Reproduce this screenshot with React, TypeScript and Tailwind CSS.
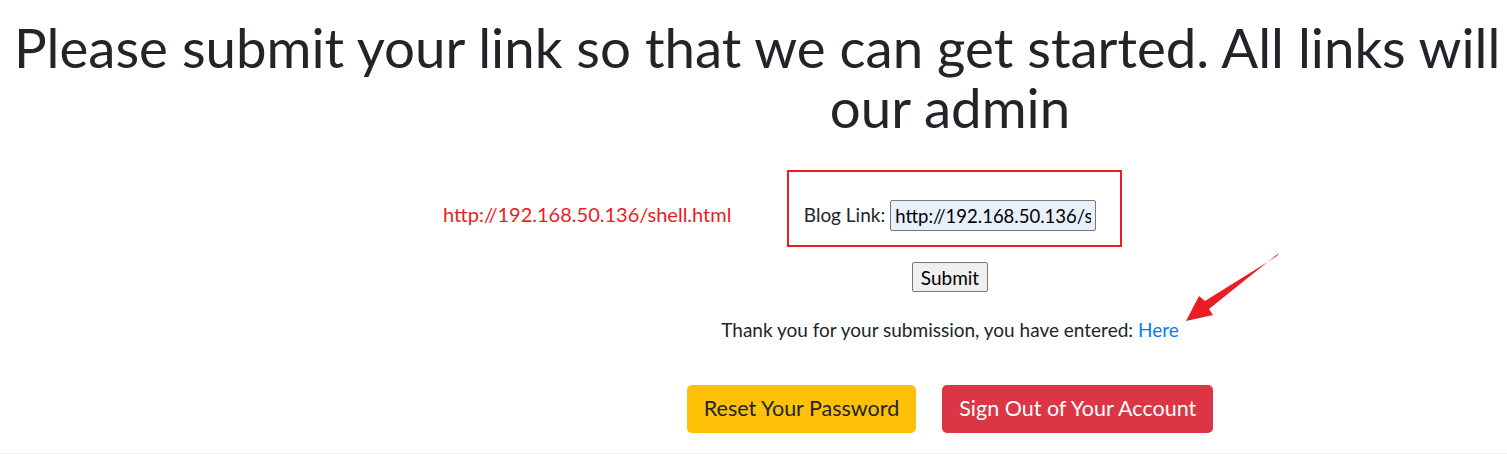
import React from "react";

export default function App() {
  const font = { fontFamily: 'Lato, "Open Sans", Arial, sans-serif' };
  return (
    <div
      className="relative w-[1507px] h-[454px] overflow-hidden bg-white border-b border-[#efefef] text-[#212529]"
      style={font}
    >
      <div className="w-[1900px] flex flex-col">
        <h1 className="pt-[17px] text-[54.6px] leading-[60px] font-normal">
          <div className="pl-[14px] whitespace-nowrap">
            Please submit your link so that we can get started. All links will
          </div>
          <div className="ml-[14px] w-[1872px] text-center">our admin</div>
        </h1>

        <form className="flex flex-col items-center mt-[63px]">
          <div className="flex items-center gap-[5px] text-[19px]">
            <label>Blog Link:</label>
            <input
              readOnly
              value="http://192.168.50.136/shell.html"
              className="w-[206px] h-[31px] px-[4px] border border-[#767676] rounded-[2px] bg-[#e8f0fe] text-[18.5px] text-black outline-none"
              style={font}
            />
          </div>
          <button
            type="button"
            className="mt-[31px] h-[30px] px-[8px] bg-[#efefef] border border-[#767676] rounded-[2px] text-[19px] text-black leading-none"
          >
            Submit
          </button>
          <p className="mt-[24px] text-[19px]">
            Thank you for your submission, you have entered:{" "}
            <a className="text-[#007bff]">Here</a>
          </p>
          <div className="mt-[40px] flex gap-[26px]">
            <button
              type="button"
              className="h-[48px] px-[17px] rounded-[5px] bg-[#ffc107] text-[#212529] text-[21.5px]"
            >
              Reset Your Password
            </button>
            <button
              type="button"
              className="h-[48px] px-[17px] rounded-[5px] bg-[#dc3545] text-white text-[21.5px]"
            >
              Sign Out of Your Account
            </button>
          </div>
        </form>
      </div>

      {/* annotations */}
      <div className="absolute left-[443px] top-[199px] text-[20px] text-[#ec1c24]">
        http://192.168.50.136/shell.html
      </div>
      <div className="absolute left-[787px] top-[170px] w-[335px] h-[77px] border-2 border-[#ec1c24]" />
      <svg
        className="absolute left-[1180px] top-[248px]"
        width="110"
        height="80"
        viewBox="1180 248 110 80"
      >
        <polygon
          points="1279,253 1277,256 1205,301 1199,296 1186,321 1213,315 1209,309"
          fill="#ec1c24"
        />
      </svg>
    </div>
  );
}
